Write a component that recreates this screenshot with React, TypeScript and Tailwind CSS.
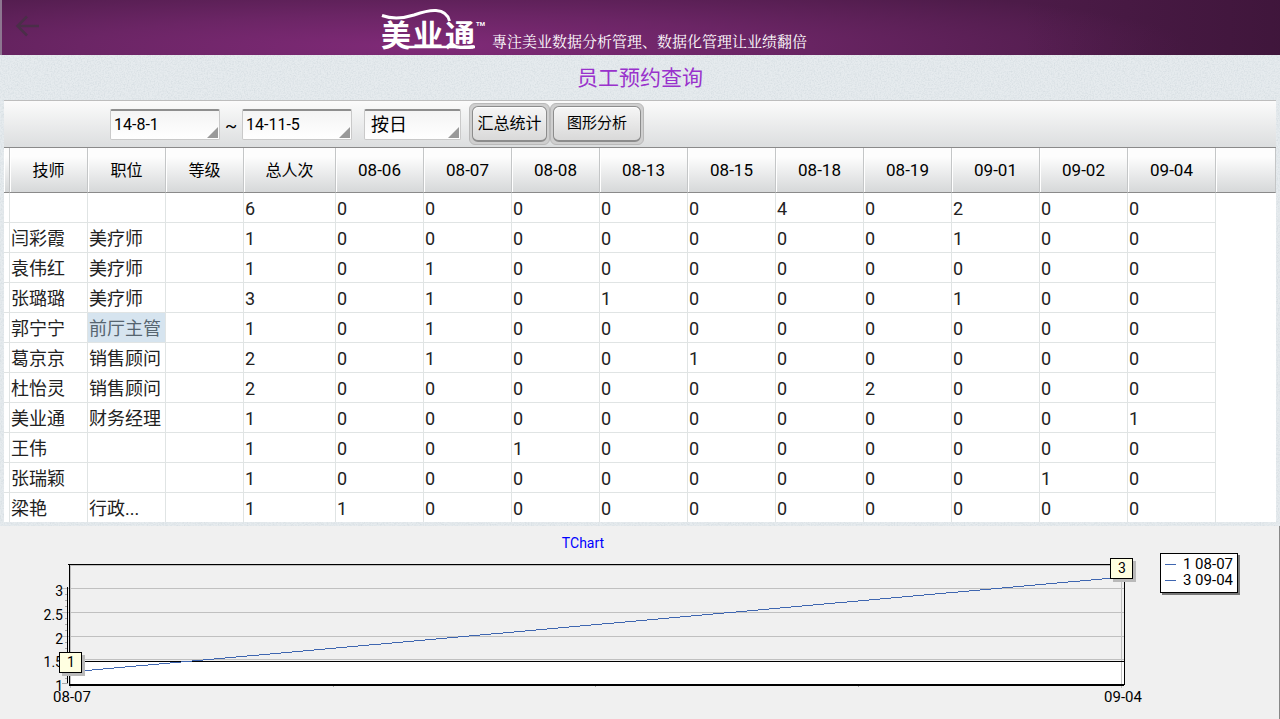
import type { ReactNode } from "react";

const dates = [
  "08-06",
  "08-07",
  "08-08",
  "08-13",
  "08-15",
  "08-18",
  "08-19",
  "09-01",
  "09-02",
  "09-04",
];

type Row = { name: string; job: string; total: number; counts: number[] };

const rows: Row[] = [
  { name: "", job: "", total: 6, counts: [0, 0, 0, 0, 0, 4, 0, 2, 0, 0] },
  { name: "闫彩霞", job: "美疗师", total: 1, counts: [0, 0, 0, 0, 0, 0, 0, 1, 0, 0] },
  { name: "袁伟红", job: "美疗师", total: 1, counts: [0, 1, 0, 0, 0, 0, 0, 0, 0, 0] },
  { name: "张璐璐", job: "美疗师", total: 3, counts: [0, 1, 0, 1, 0, 0, 0, 1, 0, 0] },
  { name: "郭宁宁", job: "前厅主管", total: 1, counts: [0, 1, 0, 0, 0, 0, 0, 0, 0, 0] },
  { name: "葛京京", job: "销售顾问", total: 2, counts: [0, 1, 0, 0, 1, 0, 0, 0, 0, 0] },
  { name: "杜怡灵", job: "销售顾问", total: 2, counts: [0, 0, 0, 0, 0, 0, 2, 0, 0, 0] },
  { name: "美业通", job: "财务经理", total: 1, counts: [0, 0, 0, 0, 0, 0, 0, 0, 0, 1] },
  { name: "王伟", job: "", total: 1, counts: [0, 0, 1, 0, 0, 0, 0, 0, 0, 0] },
  { name: "张瑞颖", job: "", total: 1, counts: [0, 0, 0, 0, 0, 0, 0, 0, 1, 0] },
  { name: "梁艳", job: "行政...", total: 1, counts: [1, 0, 0, 0, 0, 0, 0, 0, 0, 0] },
];

const selectedRow = 4;

const Texture = () => (
  <svg className="absolute inset-0 w-full h-full opacity-35" aria-hidden="true">
    <filter id="grain">
      <feTurbulence type="fractalNoise" baseFrequency="0.7" numOctaves="2" seed="4" />
      <feColorMatrix values="0 0 0 0 0.45  0 0 0 0 0.53  0 0 0 0 0.58  1.8 0 0 0 -0.7" />
    </filter>
    <rect width="100%" height="100%" filter="url(#grain)" />
  </svg>
);

const Logo = () => (
  <svg width="106" height="55" viewBox="0 0 106 55" role="img" aria-label="美业通">
    <path
      d="M2 15.500C13 19.500 23 18.500 34 15C44 11.500 50 10 56 10.500C63 11 68 15 69.500 21"
      fill="none"
      stroke="#fff"
      strokeWidth="3"
    />
    <path d="M26 47H95" stroke="#fff" strokeWidth="2.500" />
    <text
      x="1 33 65"
      y="46"
      fill="#fff"
      fontSize="30"
      fontWeight="700"
      className="font-['Noto_Sans_CJK_SC',sans-serif]"
    >
      美业通
    </text>
    <text x="96" y="26" fill="#fff" fontSize="6" fontWeight="700">
      TM
    </text>
  </svg>
);

const Header = () => (
  <header className="relative h-[55px] border-l-2 border-[#8d7690] bg-[radial-gradient(ellipse_60%_130%_at_33%_85%,#802a78_0%,#6b2565_45%,#4c1b48_100%)]">
    <div className="flex h-full bg-linear-to-r from-transparent from-80% to-[#33112f]/50">
      <button aria-label="返回" className="w-[378px] shrink-0 pb-1 pl-3">
        <svg width="26" height="24" viewBox="0 0 26 24" fill="none" stroke="#4a2e48" strokeWidth="2.500">
          <path d="M25 12H4M13 2.500L3.500 12L13 21.500" />
        </svg>
      </button>
      <Logo />
      <p className="self-end pb-1 pl-1.5 text-[15px] leading-5 text-white whitespace-nowrap font-['Noto_Serif_CJK_SC','Noto_Sans_CJK_SC',serif]">
        專注美业数据分析管理、数据化管理让业绩翻倍
      </p>
    </div>
  </header>
);

const Corner = () => (
  <svg width="11" height="11" className="absolute right-0.5 bottom-0.5 pointer-events-none">
    <path d="M11 0V11H0Z" fill="#999" />
  </svg>
);

const fieldClass =
  "w-full h-[31px] rounded-xs border border-[#c9c9c9] border-t-2 border-t-[#8e8e8e] bg-linear-to-b from-[#f4f4f4] to-white outline-none";

const DateField = ({ label, value }: { label: string; value: string }) => (
  <label className="relative w-[110px]">
    <input
      type="text"
      aria-label={label}
      defaultValue={value}
      className={`${fieldClass} px-[3px] text-base`}
    />
    <Corner />
  </label>
);

const ToolButton = ({ children, className }: { children: ReactNode; className: string }) => (
  <span className="flex h-[42px] rounded-md border border-[#b9b9b9] bg-[#cfcfcf] p-0.5">
    <button
      className={`${className} rounded-md border border-[#8c8c8c] border-b-2 bg-linear-to-b from-[#f6f6f6] to-[#d9d9d9] whitespace-nowrap shadow-[inset_0_1px_1px_#fff]`}
    >
      {children}
    </button>
  </span>
);

const Toolbar = () => (
  <form className="flex h-12 items-center border-t border-b border-t-[#bdbdbd] border-b-[#8a8a8a] bg-linear-to-b from-[#fbfbfb] to-[#dcdedf] pl-[106px]">
    <DateField label="开始日期" value="14-8-1" />
    <span className="w-[22px] pt-1 text-center text-lg">~</span>
    <DateField label="结束日期" value="14-11-5" />
    <label className="relative ml-3 w-[97px]">
      <select aria-label="统计方式" className={`${fieldClass} appearance-none px-1.5 text-lg leading-6`}>
        <option>按日</option>
        <option>按月</option>
      </select>
      <Corner />
    </label>
    <div className="flex pl-2">
      <ToolButton className="w-[75px] text-base">汇总统计</ToolButton>
      <ToolButton className="w-[88px] text-[15px]">图形分析</ToolButton>
    </div>
  </form>
);

const Th = ({ children, className = "" }: { children?: ReactNode; className?: string }) => (
  <th
    className={`${className} h-[45px] border-r border-b border-r-[#c4c6c7] border-b-[#8a8a8a] bg-linear-to-b from-[#fdfdfd] from-20% to-[#d6d8d9] p-0 pt-0.5 font-normal text-black shadow-[inset_1px_0_0_#fff]`}
  >
    {children}
  </th>
);

const tdClass = "h-[30px] border-r border-b border-[#e0e4e4] p-0 pt-0.5 pl-px whitespace-nowrap";

const BookingTable = () => (
  <table className="w-full table-fixed border-separate border-spacing-0 bg-white text-[#222]">
    <colgroup>
      <col className="w-[6px]" />
      <col className="w-[78px]" />
      <col className="w-[78px]" />
      <col className="w-[78px]" />
      <col className="w-[92px]" />
      {dates.map((d) => (
        <col key={d} className="w-[88px]" />
      ))}
      <col />
    </colgroup>
    <thead>
      <tr>
        <Th />
        <Th className="text-base">技师</Th>
        <Th className="text-base">职位</Th>
        <Th className="text-base">等级</Th>
        <Th className="text-base">总人次</Th>
        {dates.map((d) => (
          <Th key={d} className="text-[17px]">
            {d}
          </Th>
        ))}
        <Th />
      </tr>
    </thead>
    <tbody className="text-lg leading-6">
      {rows.map((row, i) => (
        <tr key={i}>
          <td className={tdClass} />
          <td className={tdClass}>{row.name}</td>
          <td className={i === selectedRow ? `${tdClass} bg-[#d6e4ef] text-[#566570]` : tdClass}>
            {row.job}
          </td>
          <td className={tdClass} />
          <td className={tdClass}>{row.total}</td>
          {row.counts.map((n, j) => (
            <td key={j} className={tdClass}>
              {n}
            </td>
          ))}
          <td />
        </tr>
      ))}
    </tbody>
  </table>
);

const yAxis = [
  { label: "3", y: 62.5 },
  { label: "2.5", y: 86.5 },
  { label: "2", y: 110.5 },
  { label: "1.5", y: 133.5 },
  { label: "1", y: 157.5 },
];

const minorTicks = [68, 74, 80, 92, 98, 104, 116, 122, 128, 140, 146, 152];

const Mark = ({ x, y, value }: { x: number; y: number; value: number }) => (
  <g>
    <rect x={x + 3} y={y + 3} width="23" height="21" fill="#b9b9b9" />
    <rect x={x + 0.5} y={y + 0.5} width="22" height="20" fill="#ffffe1" stroke="#000" />
    <text x={x + 12} y={y + 15} textAnchor="middle">
      {value}
    </text>
  </g>
);

const LineChart = () => (
  <svg viewBox="0 0 1160 193" className="min-w-0 flex-1 self-start" fontSize="14">
    <text x="583" y="22" fill="#00f" textAnchor="middle">
      TChart
    </text>
    <g shapeRendering="crispEdges">
      <rect x="70" y="136" width="1054" height="22" fill="#fff" />
      <path d="M70.500 39V162M69 39.500H1124M1121.500 39V162" stroke="#c0c0c0" />
      {yAxis.slice(0, 4).map((t) => (
        <path key={t.label} d={`M62 ${t.y}H1124`} stroke="#c0c0c0" />
      ))}
      {minorTicks.map((y) => (
        <path key={y} d={`M65 ${y + 0.5}H68`} stroke="#aaa" />
      ))}
      <path d="M62 157.500H68M333.500 160V161M595.500 160V161M858.500 160V161" stroke="#aaa" />
      <path d="M68 38.500H1124.500V159M69.500 38V159M67.500 61V157M69 135.500H1124" fill="none" stroke="#000" />
      <path d="M69 159H1124" stroke="#000" strokeWidth="2" />
      <path d="M70 146L1124 51" stroke="#3f66b0" />
    </g>
    {yAxis.map((t) => (
      <text key={t.label} x="63" y={t.y + 7} textAnchor="end">
        {t.label}
      </text>
    ))}
    <Mark x={59} y={126} value={1} />
    <Mark x={1110} y={32} value={3} />
    <g fontSize="15" textAnchor="middle">
      <text x="72" y="176">
        08-07
      </text>
      <text x="1123" y="176">
        09-04
      </text>
    </g>
  </svg>
);

const Legend = () => (
  <ul className="mt-[27px] mr-[41px] h-10 w-[78px] shrink-0 border border-black bg-white pt-0.5 pr-1 text-[15px] leading-4 shadow-[2px_2px_0_#777]">
    {["1 08-07", "3 09-04"].map((item) => (
      <li key={item} className="flex items-center justify-between pl-1 whitespace-nowrap">
        <span className="h-px w-[11px] bg-[#3f66b0]" />
        {item}
      </li>
    ))}
  </ul>
);

export default function App() {
  return (
    <div className="relative flex min-h-screen flex-col bg-[#e6ebee] text-black font-[Roboto,'Noto_Sans_CJK_SC',sans-serif]">
      <Texture />
      <Header />
      <main className="relative flex flex-1 flex-col">
        <h1 className="h-[45px] pt-px text-center text-[21px] leading-[45px] text-[#9932cc]">
          员工预约查询
        </h1>
        <div className="mx-1 mb-1 h-[422px] overflow-hidden">
          <Toolbar />
          <BookingTable />
        </div>
        <section className="flex flex-1 border-r border-[#888] bg-[#f0f0f0]">
          <LineChart />
          <Legend />
        </section>
      </main>
    </div>
  );
}
